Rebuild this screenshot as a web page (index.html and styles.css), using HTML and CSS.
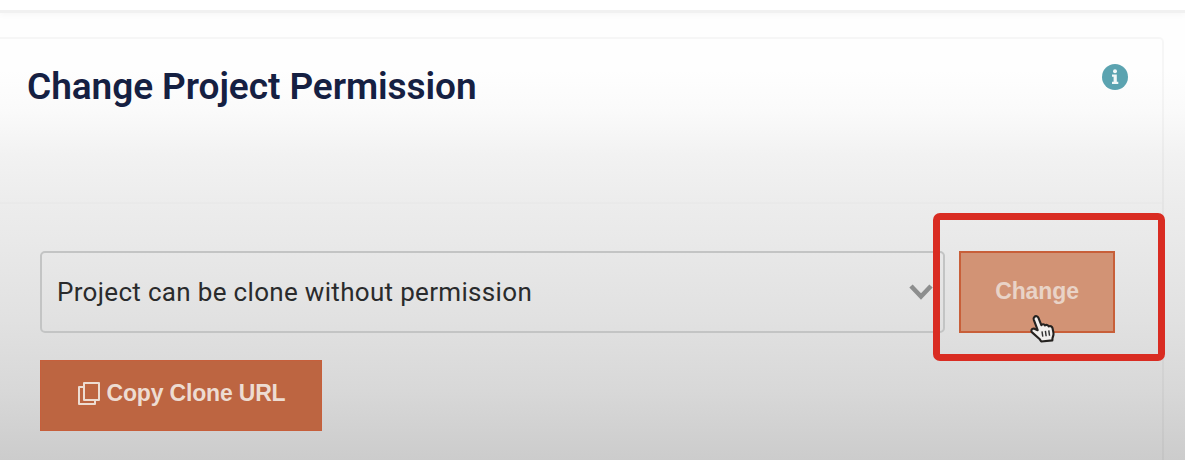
FILE: index.html
```html
<!DOCTYPE html>
<html lang="en">
<head>
<meta charset="utf-8">
<title>Change Project Permission</title>
<link rel="stylesheet" href="styles.css">
</head>
<body>
<div class="page">
  <div class="topbar"></div>
  <section class="card">
    <header class="card-header">
      <h1 class="title">Change Project Permission</h1>
      <svg class="info" viewBox="0 0 26 26"><circle cx="13" cy="13" r="13" fill="#5ba3b0"/><circle cx="13" cy="7.2" r="2" fill="#f2f8f8"/><path d="M10 10.500h4.800v7.200h1.500v2.300h-6.300v-2.300h1.600v-4.900H10z" fill="#f2f8f8"/></svg>
    </header>
    <div class="card-body">
      <div class="row">
        <div class="select">
          <span class="select-text">Project can be clone without permission</span>
          <svg class="chevron" viewBox="0 0 24 18"><path d="M2 3l10 10.500L22 3" fill="none" stroke="#8d8e8e" stroke-width="4.600"/></svg>
        </div>
        <div class="change-wrap">
          <button class="btn-change">Change</button>
          <div class="highlight"></div>
          <svg class="cursor" viewBox="0 0 28 30"><path d="M5.500 2.500C7 1 9 1.500 9.800 3.500l3 7.500c1-1.300 3-1.200 3.800.3 1.200-1 3.200-.6 3.800 1 1.600-.8 3.400 0 4 1.800l1 5.200c.3 2-.5 3.500-1 5l-.2 2.500-11.500 1.200-1.500-2.300-8-7.200C1.700 17 2.500 14.500 5 14.500l4 1.700L5 5.500c-.4-1.200-.3-2.300.5-3z" fill="#f1efed" stroke="#252220" stroke-width="2.200" stroke-linejoin="round"/><path d="M13.500 17.500l.8 5.500M17 17l.8 5.500M20.500 16.500l.8 5.500" fill="none" stroke="#333" stroke-width="1.500"/></svg>
        </div>
      </div>
      <button class="btn-copy">
        <svg class="copy-icon" viewBox="0 0 24 25"><path d="M7 2h15v17H7zM6 6H2v17h16v-3.500" fill="none" stroke="#eddcd2" stroke-width="2" stroke-linejoin="round"/></svg>
        <span class="copy-text">Copy Clone URL</span>
      </button>
    </div>
  </section>
</div>
</body>
</html>
```
FILE: styles.css
```css
* { box-sizing: border-box; }
body { margin: 0; font-family: Roboto, sans-serif; }
.page {
  width: 1185px;
  height: 460px;
  overflow: hidden;
  background: linear-gradient(#fefefe 0, #fefefe 70px, #fafafa 112px, #f2f2f2 155px, #ececec 205px, #e9e9e9 240px, #e1e1e1 320px, #d8d8d8 390px, #cccccc 460px);
}
.topbar {
  height: 13px;
  background: #fff;
  border-bottom: 3px solid #f1f1f1;
  box-shadow: 0 2px 6px rgba(0, 0, 0, 0.03);
}
.card {
  width: 1164px;
  height: 480px;
  margin-top: 24px;
  border: 2px solid rgba(0, 0, 0, 0.03);
  border-left: 0;
  border-top-right-radius: 5px;
}
.card-header {
  display: flex;
  justify-content: space-between;
  align-items: flex-start;
  height: 165px;
  padding: 25px 34px 0 27px;
  border-bottom: 2px solid rgba(0, 0, 0, 0.012);
}
.title {
  margin: 0;
  padding-top: 1px;
  font-size: 37px;
  line-height: 44px;
  font-weight: 600;
  letter-spacing: -0.06px;
  color: #152042;
  white-space: nowrap;
}
.info { width: 26px; height: 26px; }
.card-body { padding: 47px 0 0 40px; }
.row { display: flex; gap: 14px; }
.select {
  display: flex;
  align-items: center;
  justify-content: space-between;
  width: 905px;
  height: 82px;
  padding: 0 10px 0 15px;
  border: 2px solid #c3c4c4;
  border-radius: 5px;
}
.select-text {
  font-size: 26px;
  letter-spacing: 0.32px;
  color: #2a2b2c;
  white-space: nowrap;
}
.chevron { width: 24px; height: 18px; }
.change-wrap { position: relative; }
button {
  display: flex;
  align-items: center;
  justify-content: center;
  padding: 0;
  font-family: "Liberation Sans", Arial, sans-serif;
  font-weight: 700;
  font-size: 23px;
}
.btn-change {
  width: 156px;
  height: 82px;
  padding-bottom: 1px;
  background: #d29375;
  border: 2px solid #c85f39;
  color: #e9d3c7;
  letter-spacing: -0.1px;
}
.highlight {
  position: absolute;
  left: -26px;
  top: -38px;
  width: 232px;
  height: 148px;
  border: 7px solid #d92c22;
  border-radius: 7px;
}
.cursor { position: absolute; left: 70px; top: 63px; width: 27px; height: 30px; }
.btn-copy {
  width: 282px;
  height: 71px;
  margin-top: 27px;
  padding-bottom: 4px;
  gap: 6px;
  background: #bd6541;
  border: 1px solid #c65f3b;
  color: #eddcd2;
  letter-spacing: -0.18px;
}
.copy-icon { width: 24px; height: 25px; }
.copy-text { white-space: nowrap; }
```
